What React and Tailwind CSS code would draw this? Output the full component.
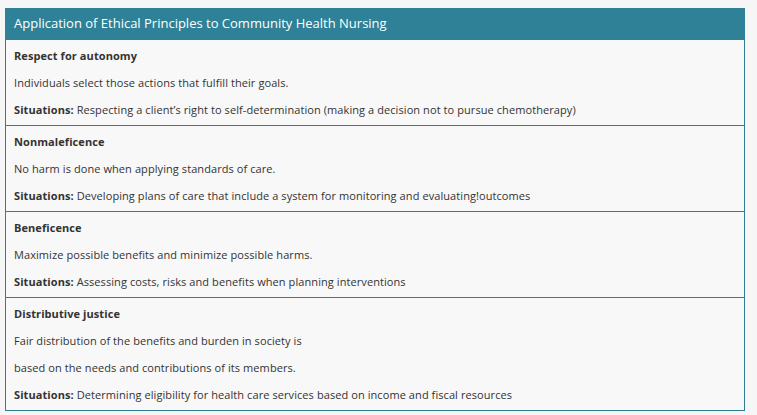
import React from 'react';

const principles = [
  {
    title: 'Respect for autonomy',
    lines: ['Individuals select those actions that fulfill their goals.'],
    situation: 'Respecting a client’s right to self-determination (making a decision not to pursue chemotherapy)',
  },
  {
    title: 'Nonmaleficence',
    lines: ['No harm is done when applying standards of care.'],
    situation: 'Developing plans of care that include a system for monitoring and evaluating!outcomes',
  },
  {
    title: 'Beneficence',
    lines: ['Maximize possible benefits and minimize possible harms.'],
    situation: 'Assessing costs, risks and benefits when planning interventions',
  },
  {
    title: 'Distributive justice',
    lines: [
      'Fair distribution of the benefits and burden in society is',
      'based on the needs and contributions of its members.',
    ],
    situation: 'Determining eligibility for health care services based on income and fiscal resources',
  },
];

const App = () => {
  return (
    <div
      className="min-h-[415px] w-[757px] bg-[#f6f6f6] pt-2 pl-[5px]"
      style={{ fontFamily: '"Open Sans", "Noto Sans", sans-serif' }}
    >
      <div className="w-[740px] bg-[#f8f8f8]">
        {/* Header */}
        <div className="h-[31px] bg-[#2e8196] px-[9px] text-[13px] leading-[31px] text-white">
          Application of Ethical Principles to Community Health Nursing
        </div>
        <div className="border-x border-b border-[#2f8095]">
          {principles.map((p) => (
            <div
              key={p.title}
              className="border-t border-[#2f8095] px-2 py-[2px] text-[11px] leading-[27px] tracking-[0.08px] text-[#333]"
            >
              <div className="font-bold">{p.title}</div>
              {p.lines.map((line) => (
                <div key={line}>{line}</div>
              ))}
              <div>
                <span className="font-bold">Situations:</span> {p.situation}
              </div>
            </div>
          ))}
        </div>
      </div>
    </div>
  );
};

export default App;
